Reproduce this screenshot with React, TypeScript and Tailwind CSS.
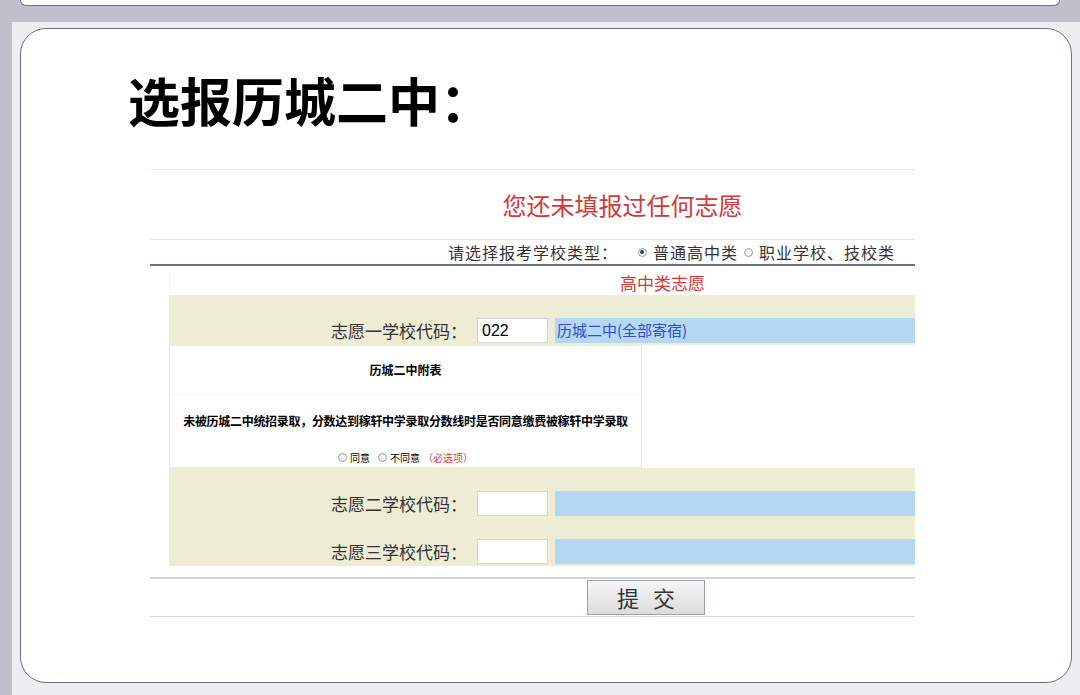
import React from "react";

const cjk = { fontFamily: '"Noto Sans CJK SC", "Noto Sans", sans-serif' };

const Radio = ({ checked }: { checked?: boolean }) => (
  <span className="inline-flex h-[9px] w-[9px] items-center justify-center rounded-full border border-gray-400 bg-gray-100 align-middle">
    {checked && <span className="h-[4px] w-[4px] rounded-full bg-gray-700" />}
  </span>
);

const CodeRow = ({ label, code, name, h }: { label: string; code?: string; name?: string; h: string }) => (
  <div className={`flex items-end bg-[#edecd5] pb-[2px] ${h}`}>
    <div className="w-[308px] pr-[10px] text-right text-[17px] leading-[24px] text-[#333]">{label}</div>
    <div className="flex h-[25px] w-[71px] items-center border border-gray-300 bg-white px-[4px] text-[16px] text-black" style={{ fontFamily: '"Liberation Sans", sans-serif' }}>
      {code}
    </div>
    <div className="ml-[7px] flex h-[25px] flex-1 items-center bg-[#b5d7f2] px-[2px] text-[15px] text-[#2f4fc8]">{name}</div>
  </div>
);

export default function App() {
  return (
    <div className="flex h-[695px] w-[1080px] flex-col overflow-hidden bg-[#bfc0cb]" style={cjk}>
      <div className="mx-[20px] h-[6px] rounded-b-[14px] border border-t-0 border-gray-500 bg-white" />
      <div className="ml-[12px] mt-[2px] h-[14px] bg-[#bfc0cb]" />
      <div className="ml-[12px] flex flex-1 bg-[#eeeef1] pb-[12px] pl-[8px]">
        <div className="mr-[8px] mt-[6px] flex flex-1 flex-col rounded-[26px] border border-gray-500 bg-white pl-[107px] pr-[156px] pt-[36px]">
          <h1 className="text-[52px] font-bold leading-[70px] text-black">选报历城二中：</h1>
          <div className="ml-[22px] mt-[34px] flex flex-col">
            <div className="h-px bg-gray-200" />
            <div className="flex h-[69px] items-center justify-center pl-[180px] text-[24px] text-[#d23a3a]">您还未填报过任何志愿</div>
            <div className="h-px bg-gray-200" />
            <div className="flex h-[24px] items-center justify-end gap-[6px] pr-[20px] text-[16px] tracking-[1px] text-[#333]">
              <span className="mr-[14px]">请选择报考学校类型：</span>
              <Radio checked /> <span>普通高中类</span>
              <Radio /> <span>职业学校、技校类</span>
            </div>
            <div className="h-[2px] bg-gray-500" />
            <div className="ml-[19px] mt-[5px] flex flex-col">
              <div className="flex h-[24px] items-center justify-center border-l border-gray-100 pl-[240px] text-[17px] text-[#d23a3a]">高中类志愿</div>
              <CodeRow label="志愿一学校代码：" code="022" name="历城二中(全部寄宿)" h="h-[50px]" />
              <div className="flex">
                <div className="flex w-[473px] flex-col border border-gray-200 bg-white text-black">
                  <div className="flex h-[48px] items-center justify-center text-[12px] font-bold">历城二中附表</div>
                  <div className="h-px bg-gray-100" />
                  <div className="flex h-[52px] items-center justify-center whitespace-nowrap text-[12px] font-bold tracking-[-0.3px]">未被历城二中统招录取，分数达到稼轩中学录取分数线时是否同意缴费被稼轩中学录取</div>
                  <div className="flex h-[20px] items-center justify-center gap-[3px] text-[10px]">
                    <Radio /> <span>同意</span> <span className="w-[2px]" /> <Radio /> <span>不同意</span>
                    <span className="text-[#d23a3a]">（必选项）</span>
                  </div>
                </div>
              </div>
              <CodeRow label="志愿二学校代码：" h="h-[50px]" />
              <CodeRow label="志愿三学校代码：" h="h-[48px]" />
            </div>
            <div className="mt-[11px] h-[2px] bg-gray-300" />
            <div className="flex h-[37px] items-center pl-[437px]">
              <button className="h-[35px] w-[118px] border border-gray-400 bg-gradient-to-b from-[#f6f6f6] to-[#dcdcdc] pl-[14px] text-[22px] tracking-[14px] text-[#333]">提交</button>
            </div>
            <div className="h-px bg-gray-300" />
          </div>
        </div>
      </div>
    </div>
  );
}
